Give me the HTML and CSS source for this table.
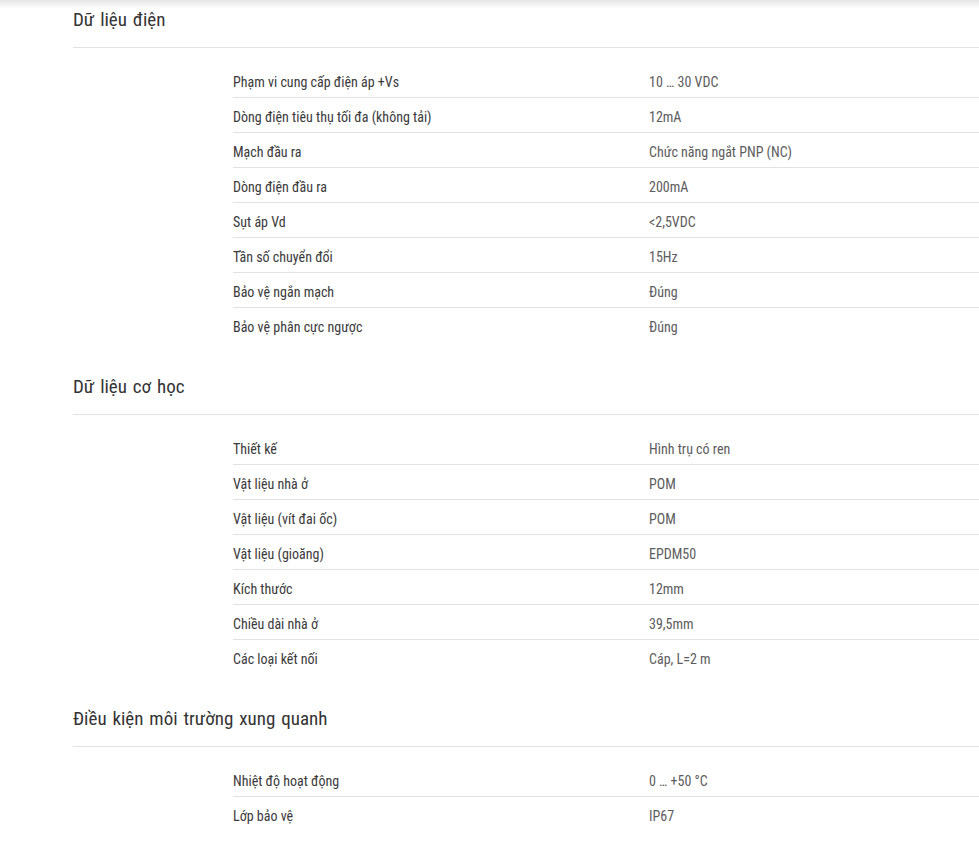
FILE: index.html
```html
<!DOCTYPE html>
<html lang="vi">
<head>
<meta charset="utf-8">
<title>Thông số kỹ thuật</title>
<link rel="stylesheet" href="styles.css">
</head>
<body>
<div class="topshade"></div>
<main class="specs">
  <section class="group">
    <h2 class="group-title">Dữ liệu điện</h2>
    <div class="table">
      <div class="row"><span class="label">Phạm vi cung cấp điện áp +Vs</span><span class="value">10 … 30 VDC</span></div>
      <div class="row"><span class="label">Dòng điện tiêu thụ tối đa (không tải)</span><span class="value">12mA</span></div>
      <div class="row"><span class="label">Mạch đầu ra</span><span class="value">Chức năng ngắt PNP (NC)</span></div>
      <div class="row"><span class="label">Dòng điện đầu ra</span><span class="value">200mA</span></div>
      <div class="row"><span class="label">Sụt áp Vd</span><span class="value">&lt;2,5VDC</span></div>
      <div class="row"><span class="label">Tần số chuyển đổi</span><span class="value">15Hz</span></div>
      <div class="row"><span class="label">Bảo vệ ngắn mạch</span><span class="value">Đúng</span></div>
      <div class="row"><span class="label">Bảo vệ phân cực ngược</span><span class="value">Đúng</span></div>
    </div>
  </section>
  <section class="group">
    <h2 class="group-title">Dữ liệu cơ học</h2>
    <div class="table">
      <div class="row"><span class="label">Thiết kế</span><span class="value">Hình trụ có ren</span></div>
      <div class="row"><span class="label">Vật liệu nhà ở</span><span class="value">POM</span></div>
      <div class="row"><span class="label">Vật liệu (vít đai ốc)</span><span class="value">POM</span></div>
      <div class="row"><span class="label">Vật liệu (gioăng)</span><span class="value">EPDM50</span></div>
      <div class="row"><span class="label">Kích thước</span><span class="value">12mm</span></div>
      <div class="row"><span class="label">Chiều dài nhà ở</span><span class="value">39,5mm</span></div>
      <div class="row"><span class="label">Các loại kết nối</span><span class="value">Cáp, L=2 m</span></div>
    </div>
  </section>
  <section class="group">
    <h2 class="group-title">Điều kiện môi trường xung quanh</h2>
    <div class="table">
      <div class="row"><span class="label">Nhiệt độ hoạt động</span><span class="value">0 … +50 °C</span></div>
      <div class="row"><span class="label">Lớp bảo vệ</span><span class="value">IP67</span></div>
    </div>
  </section>
</main>
</body>
</html>
```
FILE: styles.css
```css
html, body {
  margin: 0;
  padding: 0;
  background: #fff;
  font-family: Roboto, "Liberation Sans", Arial, sans-serif;
  overflow: hidden;
}

.topshade {
  position: absolute;
  top: 0;
  left: 0;
  right: 0;
  height: 9px;
  background: linear-gradient(to bottom, #e6e6e6, rgba(255,255,255,0));
  pointer-events: none;
}

.specs {
  padding-left: 73px;
}

.group + .group {
  margin-top: 24px;
}

.group-title {
  margin: 0;
  padding: 6px 0 13px;
  height: 28px;
  line-height: 28px;
  font-size: 19px;
  font-weight: 400;
  font-stretch: 85%;
  word-spacing: 1.5px;
  color: #333;
  border-bottom: 1px solid #e2e2e2;
}

.table {
  margin-top: 15px;
  margin-left: 160px;
}

.row {
  display: flex;
  align-items: center;
  box-sizing: border-box;
  height: 35px;
  padding-top: 3px;
  border-bottom: 1px solid #e2e2e2;
  font-size: 14px;
  font-stretch: 82%;
}

.row:last-child {
  border-bottom: none;
}

.label {
  width: 416px;
  flex: none;
  color: #3a3a3a;
}

.value {
  color: #5c5c5c;
}
```
